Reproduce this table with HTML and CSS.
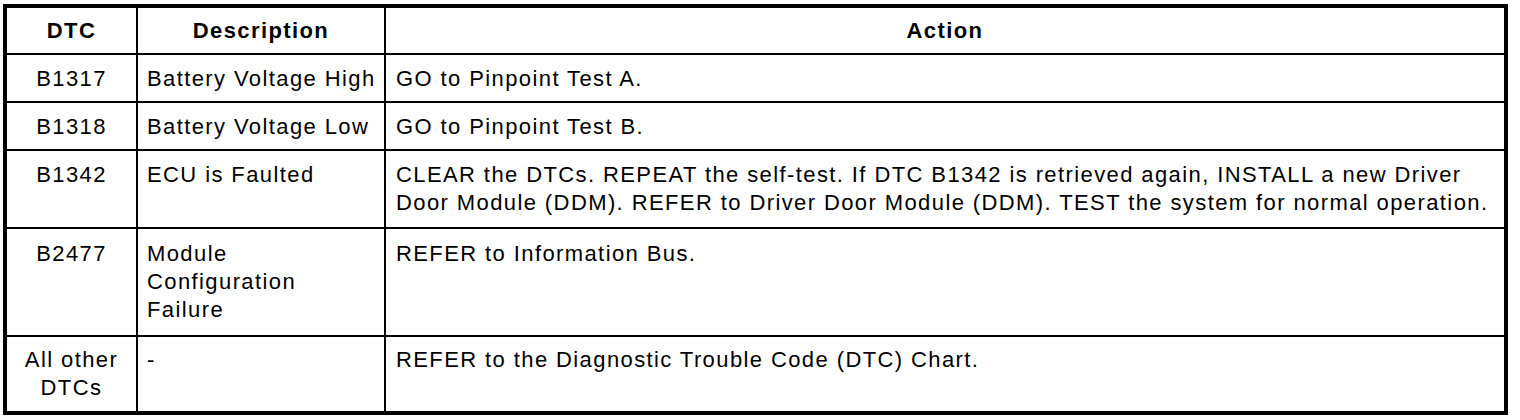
FILE: index.html
```html
<!DOCTYPE html>
<html lang="en">
<head>
<meta charset="utf-8">
<title>DTC Chart</title>
<link rel="stylesheet" href="styles.css">
</head>
<body>
<div class="page">
<table class="dtc">
  <colgroup>
    <col class="c-dtc">
    <col class="c-desc">
    <col class="c-act">
  </colgroup>
  <thead>
    <tr>
      <th>DTC</th>
      <th>Description</th>
      <th class="last">Action</th>
    </tr>
  </thead>
  <tbody>
    <tr>
      <td class="code">B1317</td>
      <td>Battery Voltage High</td>
      <td class="last">GO to Pinpoint Test A.</td>
    </tr>
    <tr>
      <td class="code">B1318</td>
      <td>Battery Voltage Low</td>
      <td class="last">GO to Pinpoint Test B.</td>
    </tr>
    <tr class="roomy">
      <td class="code">B1342</td>
      <td>ECU is Faulted</td>
      <td class="last">CLEAR the DTCs. REPEAT the self-test. If DTC B1342 is retrieved again, INSTALL a new Driver Door Module (DDM). REFER to Driver Door Module (DDM). TEST the system for normal operation.</td>
    </tr>
    <tr class="tall">
      <td class="code">B2477</td>
      <td>Module Configuration Failure</td>
      <td class="last">REFER to Information Bus.</td>
    </tr>
    <tr class="final">
      <td class="code">All other DTCs</td>
      <td>-</td>
      <td class="last">REFER to the Diagnostic Trouble Code (DTC) Chart.</td>
    </tr>
  </tbody>
</table>
</div>
</body>
</html>
```
FILE: styles.css
```css
html, body {
  margin: 0;
  padding: 0;
  background: #ffffff;
}
.page {
  padding: 4px 0 0 3px;
}
.dtc {
  border-collapse: separate;
  border-spacing: 0;
  border: 4px solid #000;
  table-layout: fixed;
  width: 1505px;
  font-family: "Liberation Sans", Arial, sans-serif;
  font-size: 22px;
  letter-spacing: 1.4px;
  color: #000;
}
.c-dtc { width: 131px; }
.c-desc { width: 248px; }
.c-act { width: 1118px; }
.dtc th,
.dtc td {
  border-right: 2px solid #000;
  border-bottom: 2px solid #000;
  line-height: 28px;
  vertical-align: top;
  text-align: left;
}
.dtc th {
  font-weight: bold;
  text-align: center;
  height: 47px;
  padding: 0;
  vertical-align: middle;
  box-sizing: border-box;
}
.dtc td {
  padding: 10px 8px 8px 9px;
}
.dtc td.last {
  padding-left: 10px;
}
.dtc .last {
  border-right: none;
}
.dtc td.code {
  text-align: center;
  padding-left: 2px;
  padding-right: 2px;
}
.dtc tr.roomy td {
  padding-bottom: 10px;
}
.dtc tr.tall td {
  padding-top: 11px;
  padding-bottom: 11px;
}
.dtc tr.final td {
  padding-top: 9px;
  padding-bottom: 9px;
  border-bottom: none;
}
```
